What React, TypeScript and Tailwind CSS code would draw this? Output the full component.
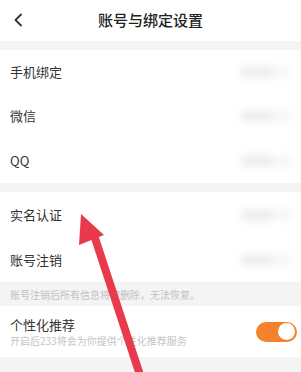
import React from 'react'

const font = { fontFamily: '"Noto Sans CJK SC", "Noto Sans", sans-serif' }

function Blurred() {
  return (
    <div className="flex items-center gap-1 blur-[4px]">
      <div className="h-[10px] w-[34px] rounded bg-[#eaeaea]" />
      <div className="h-[10px] w-[10px] rounded bg-[#efefef]" />
    </div>
  )
}

function Row({ label, h = 'h-[44px]' }: { label: string; h?: string }) {
  return (
    <div className={`flex items-center justify-between pl-[10px] pr-[12px] ${h}`}>
      <span className="text-[13px] text-[#333]">{label}</span>
      <Blurred />
    </div>
  )
}

export default function App() {
  return (
    <div className="relative h-[372px] w-[301px] overflow-hidden bg-[#f4f4f4]" style={font}>
      <div className="relative flex h-[41px] items-center justify-center bg-white">
        <svg className="absolute left-[13px] top-[13px]" width="10" height="14" viewBox="0 0 10 14">
          <path d="M8 1.5 L2.5 7 L8 12.5" fill="none" stroke="#333" strokeWidth="1.8" strokeLinecap="round" strokeLinejoin="round" />
        </svg>
        <span className="text-[15px] font-medium text-[#222]">账号与绑定设置</span>
      </div>

      <div className="mt-[9px] bg-white">
        <Row label="手机绑定" />
        <Row label="微信" />
        <Row label="QQ" h="h-[45px]" />
      </div>

      <div className="mt-[9px] bg-white">
        <Row label="实名认证" h="h-[45px]" />
        <Row label="账号注销" h="h-[45px]" />
      </div>

      <div className="flex h-[24px] items-center pl-[10px] text-[10px] text-[#c2c2c2]">
        账号注销后所有信息将被删除，无法恢复。
      </div>

      <div className="flex h-[51px] items-center justify-between bg-white pl-[10px] pr-[4px]">
        <div className="flex flex-col gap-[1px]">
          <span className="text-[13px] leading-[16px] text-[#333]">个性化推荐</span>
          <span className="text-[10px] leading-[13px] text-[#c5c5c5]">开启后233将会为你提供个性化推荐服务</span>
        </div>
        <div className="flex h-[20px] w-[41px] items-center justify-end rounded-full bg-[#f6812c] pr-[2px]">
          <div className="h-[17px] w-[17px] rounded-full bg-white" />
        </div>
      </div>

      <svg className="pointer-events-none absolute left-0 top-0" width="301" height="372" viewBox="0 0 301 372">
        <line x1="93" y1="232" x2="140" y2="375" stroke="#e83a4c" strokeWidth="8" />
        <polygon points="81,214 79,245 104,235" fill="#e83a4c" />
      </svg>
    </div>
  )
}
